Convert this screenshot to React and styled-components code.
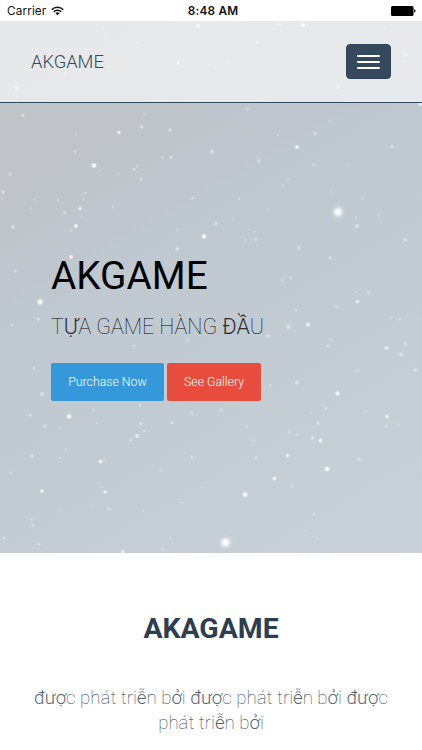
import React from "react";
import styled, { createGlobalStyle } from "styled-components";

const GlobalStyle = createGlobalStyle`
  *, *::before, *::after { box-sizing: border-box; }
  html, body { margin: 0; padding: 0; background: #fff; }
  body { font-family: Roboto, "Noto Sans", sans-serif; -webkit-font-smoothing: antialiased; }
  h1, h2, p { margin: 0; }
`;

const Page = styled.div`
  width: 100%;
  max-width: 422px;
  height: 750px;
  overflow: hidden;
  background: #fff;
`;

const StatusBar = styled.div`
  display: grid;
  grid-template-columns: 1fr auto 1fr;
  align-items: center;
  height: 21px;
  padding: 1px 5px 0 7px;
  color: #111;
  font: 400 11.8px/20px Inter, sans-serif;
`;

const Carrier = styled.div`
  display: flex;
  align-items: center;
  gap: 5px;
  letter-spacing: 0.1px;
`;

const Clock = styled.div`
  padding-left: 2px;
  font-weight: 600;
  letter-spacing: 0.2px;
`;

const BatterySlot = styled.div`
  display: flex;
  justify-content: flex-end;
`;

const Hero = styled.section`
  position: relative;
  isolation: isolate;
  display: flex;
  flex-direction: column;
  height: 532px;
  background: linear-gradient(150deg, #c1c3c5 0%, #c0c4c8 22%, #bfc7cf 38%, #c3cbd2 60%, #c8d1d9 100%);
`;

const Sky = styled.svg`
  position: absolute;
  inset: 0;
  z-index: -1;
`;

const NavBar = styled.header`
  display: flex;
  align-items: center;
  justify-content: space-between;
  height: 82px;
  padding: 0 31px 0 31px;
  background: rgba(255, 255, 255, 0.62);
  border-bottom: 1px solid #34495e;
`;

const Brand = styled.span`
  color: #34495e;
  font-size: 18.3px;
  font-weight: 300;
  line-height: 24px;
`;

const MenuButton = styled.button`
  display: flex;
  flex-direction: column;
  align-items: center;
  justify-content: center;
  gap: 4px;
  width: 45px;
  height: 35px;
  padding: 0;
  border: 1px solid #2f4358;
  border-radius: 4px;
  background: #34495e;
`;

const MenuBar = styled.span`
  width: 23px;
  height: 2px;
  border-radius: 1px;
  background: #fff;
`;

const Intro = styled.div`
  display: flex;
  flex-direction: column;
  align-items: flex-start;
  padding: 149px 0 0 51px;
`;

const Title = styled.h1`
  color: #000;
  font-size: 38.8px;
  font-weight: 400;
  line-height: 48px;
`;

const Subtitle = styled.p`
  margin-top: 13px;
  color: #000;
  font-size: 21.4px;
  font-weight: 100;
  line-height: 28px;
  white-space: nowrap;
`;

const Accented = styled.span`
  font-weight: 300;
  opacity: 0.8;
`;

const Actions = styled.div`
  display: flex;
  gap: 3px;
  margin-top: 22px;
`;

const ActionButton = styled.button`
  width: ${(p) => p.$width}px;
  height: 37.5px;
  padding: 1px 0 0;
  border: 0;
  border-radius: 2px;
  background: ${(p) => p.$color};
  color: #fff;
  font: 300 12.3px/36.5px Roboto, sans-serif;
`;

const About = styled.section`
  display: flex;
  flex-direction: column;
  align-items: center;
  padding-top: 59px;
  text-align: center;
`;

const AboutTitle = styled.h2`
  color: #2c3e50;
  font-size: 28.4px;
  font-weight: 700;
  line-height: 34px;
`;

const AboutText = styled.p`
  margin-top: 40px;
  color: #2c3e50;
  font-size: 18.7px;
  font-weight: 100;
  line-height: 25px;
  white-space: nowrap;
`;

/* x, y, radius, opacity */
const STARS = [
  [198, 5, 2, 0.8], [138, 22, 1.5, 0.5], [178, 42, 2, 0.7], [17, 67, 2, 0.7], [65, 53, 1.5, 0.4], [209, 44, 1.5, 0.4],
  [303, 4, 2, 0.8], [279, 3, 2, 0.6], [257, 21, 1.7, 0.7], [227, 40, 1.7, 0.6], [338, 66, 2, 0.6], [405, 34, 1.8, 0.6],
  [103, 8, 1.4, 0.35], [106, 17, 1.3, 0.3], [109, 45, 1.3, 0.4], [17, 75, 1.2, 0.4], [385, 8, 1.5, 0.4],
  [23, 94.5, 1.8, 0.7], [119, 111.5, 1.8, 0.9], [141.5, 106, 2, 0.7], [170, 109, 1.8, 0.6], [76, 113, 1.3, 0.35],
  [144.5, 93, 1.3, 0.35], [75.5, 130.5, 1.6, 0.5], [94, 144.5, 2.5, 1], [98.5, 150, 1.3, 0.3], [10, 153, 1.7, 0.5],
  [171, 136.5, 1.6, 0.7], [163, 136.5, 1.4, 0.4], [137, 145, 1.5, 0.45], [134, 148.5, 1.8, 0.5], [139, 151, 1.2, 0.35],
  [141, 158.5, 1.8, 0.55], [118, 152.5, 1.2, 0.3], [3, 171, 1.8, 0.7], [2, 178, 1.3, 0.4], [35, 179, 1.4, 0.35],
  [31, 187, 1.4, 0.35], [58, 179, 1.4, 0.45], [64.5, 191.5, 1.5, 0.55], [80, 187.5, 2, 0.75], [83.5, 178.5, 1.5, 0.4],
  [85.5, 172, 1.5, 0.45], [76, 205, 2, 0.95], [71, 209.5, 1.5, 0.5], [13, 206, 2, 0.7], [113, 186, 1.5, 0.4],
  [192.5, 177.5, 1.5, 0.5], [177, 208.5, 1.3, 0.4], [204, 215.5, 2.5, 1], [177, 227.5, 1.8, 0.6], [82, 196, 1.2, 0.3],
  [212, 130.5, 2, 0.7], [247.5, 88, 1.5, 0.5], [420, 83, 2, 0.8], [330, 100.5, 1.5, 0.4], [315, 112.5, 2, 0.55],
  [278, 114, 1.3, 0.3], [297, 126, 2, 0.95], [259, 140, 1.9, 0.6], [314, 143.5, 1.8, 0.5], [392, 126, 2, 0.6],
  [348, 144, 1.3, 0.3], [288, 158.5, 1.5, 0.25], [283, 164, 1.5, 0.25], [239, 178, 1.6, 0.4], [268, 188.5, 1.5, 0.35],
  [216, 202.5, 2, 0.55], [233, 198, 1.3, 0.35], [245, 219, 1.5, 0.35], [255.5, 218.5, 1.8, 0.35], [255, 211, 1.4, 0.25],
  [299, 227, 2, 0.5], [357, 205, 2, 0.7], [356, 197, 1.6, 0.35], [363, 177, 1.5, 0.3], [405, 219, 1.9, 0.55],
  [379, 195, 1.3, 0.25], [338, 191, 4, 1], [331, 171, 1.5, 0.2],
  [71, 236, 2, 0.9], [40, 281, 3, 1], [38, 298, 1.8, 0.5], [34, 347, 1.7, 0.4], [42, 373, 2, 0.7],
  [15, 250, 1.7, 0.45], [12, 304, 1.6, 0.4], [178, 228, 1.6, 0.5], [134, 325, 1.7, 0.4], [187, 319, 1.8, 0.35],
  [330, 237, 1.8, 0.4], [291, 257, 1.7, 0.35], [283, 259, 1.7, 0.35], [357.5, 280.5, 2, 0.8],
  [356, 271, 1.8, 0.3], [368.5, 271.5, 1.8, 0.5], [336, 285.5, 1.8, 0.3], [296, 289, 1.6, 0.3], [288.5, 306, 2.4, 0.55],
  [308, 303.5, 2.2, 0.8], [268, 315, 2, 0.6], [328, 325, 1.8, 0.4], [330.5, 318.5, 1.6, 0.3], [386.5, 327, 2.1, 0.75],
  [405, 322.5, 1.8, 0.6], [401, 333.5, 2, 0.6], [415.5, 349, 2, 0.6], [357, 350, 1.8, 0.35], [297, 361.5, 2, 0.65],
  [270.5, 364.5, 1.6, 0.35], [337.5, 372.5, 2.4, 0.9], [400, 298, 1.6, 0.25], [391, 297, 1.6, 0.25],
  [30, 394, 1.8, 0.45], [69, 395.5, 2.4, 0.95], [44.5, 405, 1.8, 0.6], [93, 389, 1.5, 0.35], [97, 402, 1.4, 0.3],
  [60, 407, 1.3, 0.35], [140, 384, 1.9, 0.4], [140.5, 403, 1.8, 0.55], [144, 410, 1.5, 0.4], [137, 415, 2, 0.75],
  [131, 419, 1.8, 0.5], [172, 401.5, 1.8, 0.6], [191.5, 392, 1.8, 0.45], [32, 435, 1.9, 0.6], [60, 437, 1.4, 0.3],
  [66, 428, 1.4, 0.25], [11, 452, 1.4, 0.35], [100.5, 440.5, 2, 0.95], [104, 438, 1.4, 0.4], [42, 470, 2, 0.8],
  [105, 471, 2, 0.8], [101, 466, 1.3, 0.35], [109, 488, 1.7, 0.45], [161, 449, 1.6, 0.35], [192, 436, 1.7, 0.4],
  [202, 466, 1.4, 0.3], [181, 481.5, 1.4, 0.35], [32, 499, 1.4, 0.4], [33, 504.5, 1.5, 0.45], [4, 517, 1.8, 0.5],
  [39, 523, 1.6, 0.5], [123, 531, 2, 0.8], [170.5, 517.5, 1.5, 0.4], [163, 528, 1.5, 0.4], [143, 490, 1.3, 0.3],
  [60, 488, 1.3, 0.25], [93, 484, 1.3, 0.25],
  [221, 389, 1.7, 0.4], [325.5, 387.5, 1.8, 0.5], [311, 391.5, 1.3, 0.35], [318, 402, 1.8, 0.5], [365, 390.5, 1.5, 0.35],
  [387, 395.5, 2, 0.8], [386, 405, 1.6, 0.5], [397, 404, 1.5, 0.3], [247, 406, 1.5, 0.35], [289, 411.5, 1.5, 0.35],
  [297, 413.5, 1.7, 0.45], [312.5, 417, 2, 0.65], [320.5, 419.5, 2.1, 0.85], [253, 420, 1.5, 0.3], [256, 436.5, 1.8, 0.4],
  [287.5, 434.5, 1.9, 0.75], [327, 448, 2.5, 1], [359, 438.5, 1.9, 0.5], [274.5, 457.5, 2, 0.95], [292, 465, 1.5, 0.35],
  [245, 473.5, 2.6, 1], [225.5, 521.5, 4.1, 1], [314, 493.5, 1.6, 0.35], [317, 518, 1.6, 0.3], [306, 510, 1.5, 0.2],
];

/* These letters are set heavier than the hairline text around them. */
const ACCENTED = /([đượễởỰĐẦ]+)/;

function MixedText({ children }) {
  return children
    .split(ACCENTED)
    .map((part, i) => (i % 2 ? <Accented key={i}>{part}</Accented> : part));
}

function StarrySky() {
  return (
    <Sky width="422" height="532" viewBox="0 0 422 532" aria-hidden="true">
      <defs>
        <radialGradient id="star">
          <stop offset="0" stopColor="#fff" />
          <stop offset="0.4" stopColor="#fff" stopOpacity="0.8" />
          <stop offset="1" stopColor="#fff" stopOpacity="0" />
        </radialGradient>
        <radialGradient id="halo">
          <stop offset="0" stopColor="#f2f1e6" stopOpacity="0.8" />
          <stop offset="1" stopColor="#e6ebe8" stopOpacity="0" />
        </radialGradient>
      </defs>
      {STARS.map(([x, y, r, o], i) => (
        <g key={i}>
          {r >= 4 && <circle cx={x} cy={y} r={r * 2} fill="url(#halo)" />}
          <circle cx={x} cy={y} r={r * 1.3} fill="url(#star)" opacity={o * o > 0.5 ? o : o * 0.75} />
        </g>
      ))}
    </Sky>
  );
}

function WifiIcon() {
  return (
    <svg width="13" height="10" viewBox="0 0 13 10" fill="none" stroke="#111" strokeWidth="1.5" aria-hidden="true">
      <path d="M0.7 3.7a8.2 8.2 0 0 1 11.6 0" />
      <path d="M2.8 5.9a5.2 5.2 0 0 1 7.4 0" />
      <path d="M6.5 9.2 4.5 7.2a2.9 2.9 0 0 1 4 0Z" fill="#111" stroke="none" />
    </svg>
  );
}

function BatteryIcon() {
  return (
    <svg width="26" height="11" viewBox="0 0 26 11" aria-hidden="true">
      <rect x="0" y="0" width="22.5" height="10" rx="1.5" fill="#000" />
      <path d="M23.2 3.3q1.4.3 1.4 1.7t-1.4 1.7Z" fill="#000" />
    </svg>
  );
}

export default function App() {
  return (
    <>
      <GlobalStyle />
      <Page>
        <StatusBar>
          <Carrier>
            Carrier
            <WifiIcon />
          </Carrier>
          <Clock>8:48 AM</Clock>
          <BatterySlot>
            <BatteryIcon />
          </BatterySlot>
        </StatusBar>
        <Hero>
          <StarrySky />
          <NavBar>
            <Brand>AKGAME</Brand>
            <MenuButton aria-label="Menu">
              <MenuBar />
              <MenuBar />
              <MenuBar />
            </MenuButton>
          </NavBar>
          <Intro>
            <Title>AKGAME</Title>
            <Subtitle>
              <MixedText>TỰA GAME HÀNG ĐẦU</MixedText>
            </Subtitle>
            <Actions>
              <ActionButton $width={113} $color="#3498db">Purchase Now</ActionButton>
              <ActionButton $width={94} $color="#e74c3c">See Gallery</ActionButton>
            </Actions>
          </Intro>
        </Hero>
        <About>
          <AboutTitle>AKAGAME</AboutTitle>
          <AboutText>
            <MixedText>được phát triễn bởi được phát triễn bởi được</MixedText>
            <br />
            <MixedText>phát triễn bởi</MixedText>
          </AboutText>
        </About>
      </Page>
    </>
  );
}
